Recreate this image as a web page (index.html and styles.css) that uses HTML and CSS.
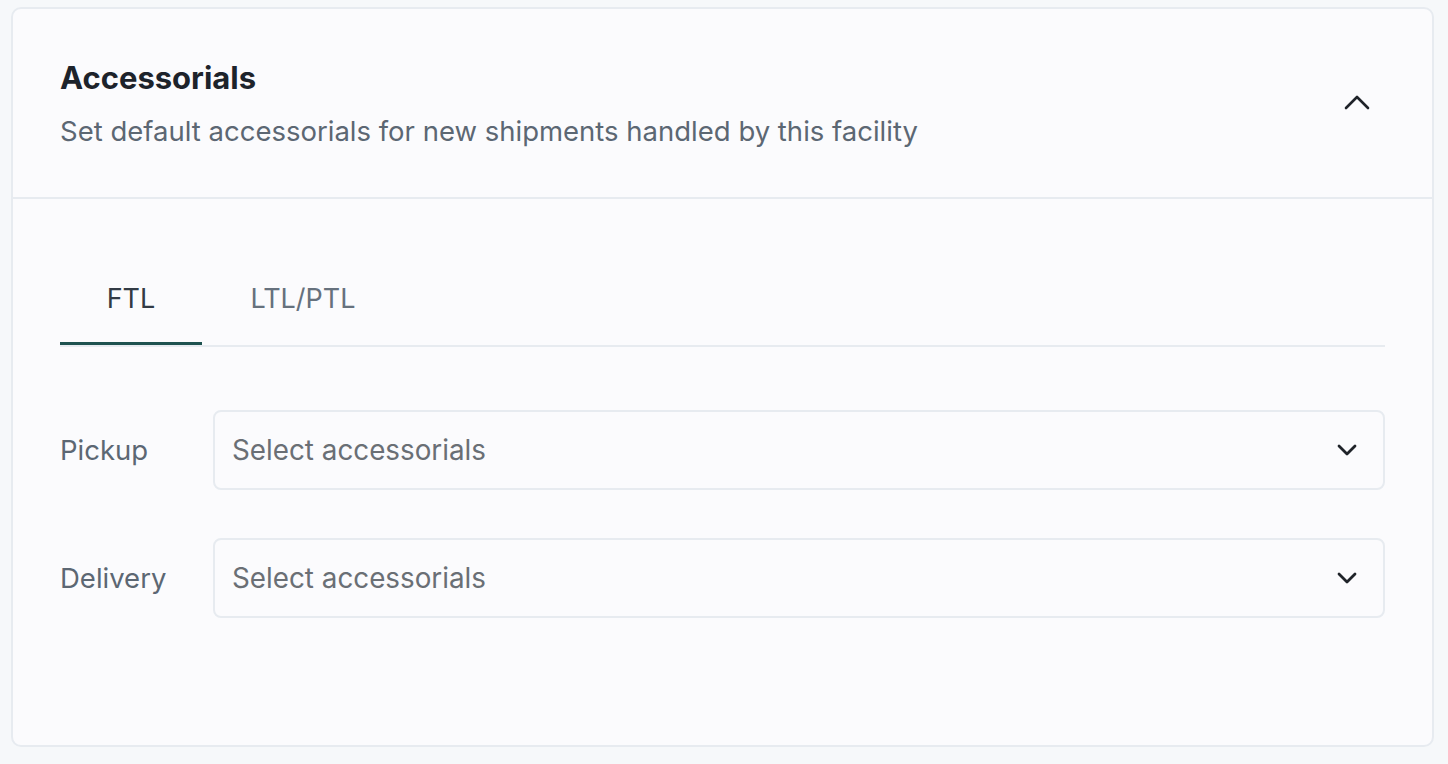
FILE: index.html
```html
<!DOCTYPE html>
<html>
<head>
<meta charset="utf-8">
<link rel="stylesheet" href="styles.css">
</head>
<body>
<section class="card">
  <header class="card-head">
    <div class="head-text">
      <h2 class="title">Accessorials</h2>
      <p class="subtitle">Set default accessorials for new shipments handled by this facility</p>
    </div>
    <button class="collapse" aria-label="Collapse">
      <svg width="26" height="16" viewBox="0 0 26 16"><path d="M2 14 L13 3 L24 14" fill="none" stroke="#1f2329" stroke-width="2.6" stroke-linecap="round" stroke-linejoin="round"/></svg>
    </button>
  </header>
  <div class="card-body">
    <nav class="tabs">
      <div class="tab active">FTL</div>
      <div class="tab">LTL/PTL</div>
    </nav>
    <div class="rows">
      <div class="row">
        <label class="label">Pickup</label>
        <div class="select">
          <span class="placeholder">Select accessorials</span>
          <svg class="chev" width="20" height="12" viewBox="0 0 20 12"><path d="M2 2 L10 10 L18 2" fill="none" stroke="#1f2329" stroke-width="2.8" stroke-linecap="round" stroke-linejoin="round"/></svg>
        </div>
      </div>
      <div class="row">
        <label class="label">Delivery</label>
        <div class="select">
          <span class="placeholder">Select accessorials</span>
          <svg class="chev" width="20" height="12" viewBox="0 0 20 12"><path d="M2 2 L10 10 L18 2" fill="none" stroke="#1f2329" stroke-width="2.8" stroke-linecap="round" stroke-linejoin="round"/></svg>
        </div>
      </div>
    </div>
  </div>
</section>
</body>
</html>
```
FILE: styles.css
```css
html, body {
  margin: 0;
  padding: 0;
  background: #f6f8fa;
  font-family: Inter, "Noto Sans", sans-serif;
}
body {
  padding: 7px 14px 16px 11px;
}
.card {
  background: #fbfbfd;
  border: 2px solid #e7ebf0;
  border-radius: 10px;
  height: 740px;
  box-sizing: border-box;
}
.card-head {
  display: flex;
  align-items: center;
  justify-content: space-between;
  padding: 0 62px 0 47px;
  height: 188px;
  border-bottom: 2px solid #e7ebf0;
}
.head-text {
  margin-top: 0;
}
.title {
  margin: 0;
  font-size: 31px;
  font-weight: 700;
  color: #1d232b;
  line-height: 40px;
}
.subtitle {
  margin: 16px 0 0;
  font-size: 27.5px;
  color: #5c6773;
  line-height: 34px;
}
.collapse {
  background: none;
  border: 0;
  padding: 0;
  display: flex;
  margin-top: -2px;
}
.card-body {
  padding: 68px 47px 0 47px;
}
.tabs {
  display: flex;
  border-bottom: 2px solid #e7ebf0;
}
.tab {
  width: 142px;
  text-align: center;
  font-size: 27px;
  color: #66717d;
  height: 78px;
  line-height: 64px;
  box-sizing: border-box;
}
.tab.active {
  color: #323b45;
  border-bottom: 3px solid #1e5250;
  margin-bottom: -2px;
}
.tabs .tab + .tab {
  width: 202px;
}
.rows {
  margin-top: 63px;
  display: flex;
  flex-direction: column;
  gap: 48px;
}
.row {
  display: flex;
  align-items: center;
}
.label {
  width: 153px;
  font-size: 27.5px;
  color: #5c6773;
}
.select {
  flex: 1;
  height: 80px;
  box-sizing: border-box;
  border: 2px solid #e7ebf0;
  border-radius: 8px;
  background: #fbfbfd;
  display: flex;
  align-items: center;
  justify-content: space-between;
  padding: 0 26px 0 17px;
}
.placeholder {
  font-size: 27.8px;
  color: #6a6f75;
}
.chev {
  display: block;
}
```
